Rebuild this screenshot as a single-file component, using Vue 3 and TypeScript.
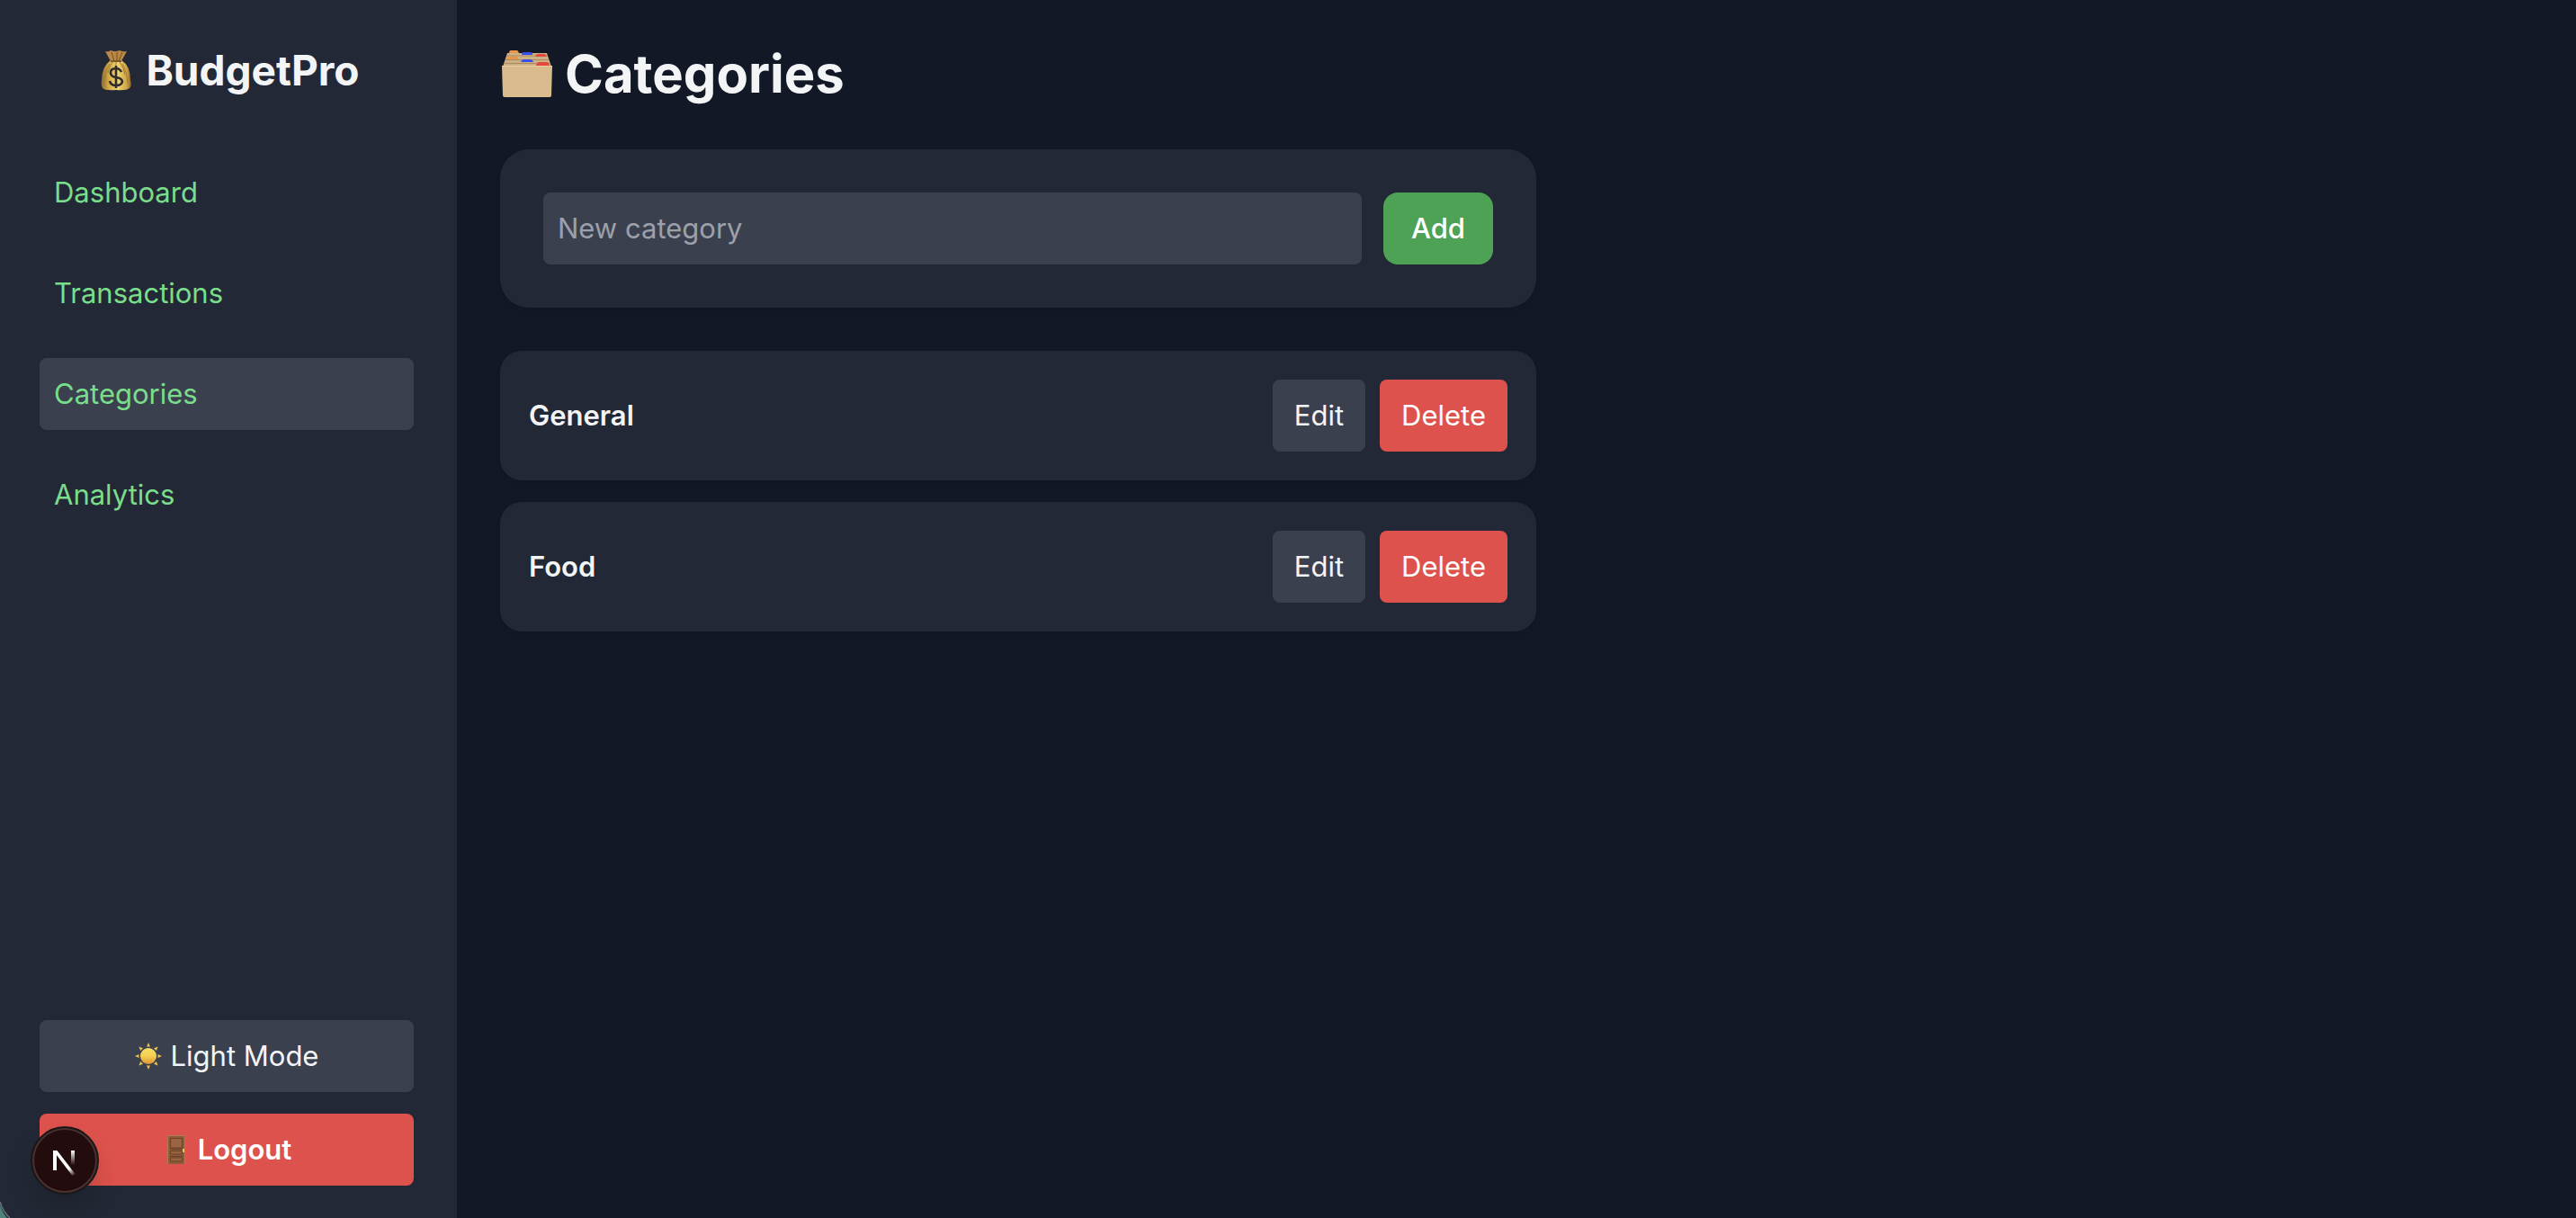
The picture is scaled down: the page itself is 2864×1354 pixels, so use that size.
<script setup lang="ts">
import { ref } from 'vue'

interface NavItem { label: string; active: boolean }

const navItems: NavItem[] = [
  { label: 'Dashboard', active: false },
  { label: 'Transactions', active: false },
  { label: 'Categories', active: true },
  { label: 'Analytics', active: false },
]
const categories = ref<string[]>(['General', 'Food'])
const newCategory = ref('')

function addCategory() {
  const name = newCategory.value.trim()
  if (name) categories.value.push(name)
  newCategory.value = ''
}
function removeCategory(index: number) {
  categories.value.splice(index, 1)
}
</script>

<template>
  <div class="app">
    <aside class="sidebar">
      <div>
        <div class="brand">
          <svg class="bag" viewBox="0 0 34 46" aria-hidden="true">
            <defs>
              <linearGradient id="bagGold" x1="0" x2="1" y1="0" y2="0">
                <stop offset="0" stop-color="#8f6a2b" />
                <stop offset=".25" stop-color="#d2ac4a" />
                <stop offset=".55" stop-color="#efd672" />
                <stop offset=".85" stop-color="#cda548" />
                <stop offset="1" stop-color="#8a642a" />
              </linearGradient>
            </defs>
            <path d="M5 2 Q9 3 11 1 Q16 3 21 1 Q25 3 29 2 L23 13 H11Z" fill="#b98847" />
            <path d="M12 3 15 13M18 3V13M24 3 20 13" stroke="#76501f" stroke-width="1" fill="none" />
            <path d="M11 12 H23 Q33 18 33 34 Q35 41 32 43 Q28 46 17 45 Q5 46 2 43 Q0 40 1 34 Q1 19 11 12Z" fill="url(#bagGold)" />
            <path d="M10 16Q5 24 4 38M24 16Q29 24 30 38M17 14V18M13 14Q9 20 8 26M21 14Q26 20 27 28" stroke="#a67d31" stroke-width="1" fill="none" />
            <path d="M11 13H23" stroke="#80592a" stroke-width="2" />
            <path d="M23 25Q21 21 17 21Q11 21 11 26Q11 30 17 31Q24 32 24 36Q23 40 17 40Q11 40 10 35M17 18V43" stroke="#302c2c" stroke-width="2.6" fill="none" />
          </svg>
          <span>BudgetPro</span>
        </div>
        <nav class="nav">
          <a v-for="item in navItems" :key="item.label" href="#" class="nav-link" :class="{ active: item.active }">{{ item.label }}</a>
        </nav>
      </div>
      <div class="side-actions">
        <button type="button" class="side-btn mode">
          <svg class="sun" viewBox="0 0 30 30" aria-hidden="true">
            <defs>
              <linearGradient id="sunDisc" x1="0" x2="0" y1="0" y2="1">
                <stop offset="0" stop-color="#f6df66" />
                <stop offset=".5" stop-color="#f5cf50" />
                <stop offset="1" stop-color="#dc9531" />
              </linearGradient>
            </defs>
            <circle cx="15" cy="15" r="9" fill="url(#sunDisc)" />
            <path v-for="n in 8" :key="n" d="M13 4.500 15 0 17 4.500Z" fill="#ecc04e" :transform="`rotate(${n * 45} 15 15)`" />
          </svg>
          <span>Light Mode</span>
        </button>
        <button type="button" class="side-btn logout">
          <svg class="door" viewBox="0 0 20 32" aria-hidden="true">
            <rect width="20" height="32" fill="#b07a55" />
            <rect x="1" y="1" width="18" height="31" fill="#8f5c3b" />
            <path d="M3.500 3.500H16.500V14H3.500ZM3.500 17.500H16.500V21H3.500ZM3.500 25H16.500V29H3.500Z" fill="#9a6442" stroke="#6b4128" stroke-width="1" />
            <path d="M3 15.500H17M3 23.500H17" stroke="#6b4128" stroke-width="1" />
            <path d="M17 15H19V19H17Z" fill="#e6c34c" />
          </svg>
          <span>Logout</span>
        </button>
      </div>
    </aside>

    <main class="main">
      <h1 class="title">
        <svg class="box" viewBox="0 0 56 54" aria-hidden="true">
          <path d="M6 4H50L55 19H1Z" fill="#cdb083" />
          <path d="M5 7H51M4 11.500H52M2 15.500H54" stroke="#a98b60" stroke-width="1" />
          <path d="M8 4Q8 1 10 1H17Q18 1 19 4Z" fill="#e8964a" />
          <path d="M22 6Q22 3 24 3H32Q34 3 34 6Z" fill="#3c4df0" />
          <path d="M37 8Q38 5 40 5H47Q49 5 50 8Z" fill="#e2483d" />
          <path d="M5 11Q6 8 8 8H16Q18 8 18 11Z" fill="#e8964a" />
          <path d="M21 14Q22 11 24 11H32Q34 11 35 14Z" fill="#3c4df0" />
          <path d="M38 18Q39 14 41 14H50Q52 14 53 18Z" fill="#e2483d" />
          <path d="M0 18H56L55 51Q55 53 53 53H3Q1 53 1 51Z" fill="#dabb8d" />
          <path d="M0 18.500H56" stroke="#ebcf9f" stroke-width="1" />
        </svg>
        <span>Categories</span>
      </h1>

      <form class="add-card" @submit.prevent="addCategory">
        <input v-model="newCategory" class="field" type="text" placeholder="New category" aria-label="New category" />
        <button type="submit" class="add">Add</button>
      </form>

      <ul class="list">
        <li v-for="(name, i) in categories" :key="name" class="item">
          <span class="name">{{ name }}</span>
          <div class="actions">
            <button type="button" class="edit">Edit</button>
            <button type="button" class="delete" @click="removeCategory(i)">Delete</button>
          </div>
        </li>
      </ul>
    </main>

    <button type="button" class="dev-badge" aria-label="Open dev tools">
      <svg viewBox="0 0 76 76" aria-hidden="true">
        <defs>
          <linearGradient id="nDiag" gradientUnits="userSpaceOnUse" x1="39" y1="42" x2="49" y2="55">
            <stop offset="0" stop-color="#fff" />
            <stop offset=".4" stop-color="#fff" />
            <stop offset="1" stop-color="#fff" stop-opacity="0" />
          </linearGradient>
          <linearGradient id="nStem" gradientUnits="userSpaceOnUse" x1="47" y1="27" x2="47" y2="43">
            <stop offset="0" stop-color="#fff" />
            <stop offset="1" stop-color="#fff" stop-opacity="0" />
          </linearGradient>
        </defs>
        <circle cx="38" cy="38" r="37" fill="#230c0d" stroke="#171717" stroke-width="2" />
        <circle cx="38" cy="38" r="35" fill="none" stroke="#493131" stroke-width="2" />
        <path d="M25 27H29V49H25Z" fill="#fff" />
        <path d="M25 27H29.500L49.500 53 46.500 55Z" fill="url(#nDiag)" />
        <path d="M45 27H49V43H45Z" fill="url(#nStem)" />
      </svg>
    </button>
    <svg class="corner" viewBox="0 0 12 24" aria-hidden="true">
      <path d="M0 6Q3 17 11 24H0Z" fill="#1b2430" />
      <path d="M0 9Q2 17 8 24H0Z" fill="#4c8078" />
      <path d="M0 6Q3 17 11 24" fill="none" stroke="#6b727c" stroke-width="1.500" />
    </svg>
  </div>
</template>

<style>
body {
  background: #121826;
}
</style>

<style scoped>
.app {
  display: flex;
  min-height: 100vh;
  background: #121826;
  color: #f3f4f6;
  font-family: Inter, "Liberation Sans", sans-serif;
  font-size: 31px;
  line-height: 48px;
}
.app *,
.app {
  box-sizing: border-box;
}
button,
input {
  margin: 0;
  border: 0;
  font: inherit;
  color: inherit;
}
button {
  cursor: pointer;
}
svg {
  display: block;
  flex: none;
}
.sidebar {
  display: flex;
  flex: none;
  flex-direction: column;
  justify-content: space-between;
  width: 508px;
  padding: 46px 48px 36px 44px;
  background: #222835;
}
.brand {
  display: flex;
  align-items: center;
  justify-content: center;
  gap: 16px;
  margin-bottom: 64px;
  padding-left: 8px;
  font-size: 46px;
  font-weight: 700;
  line-height: 64px;
}
.bag {
  width: 34px;
  height: 46px;
}
.nav {
  display: flex;
  flex-direction: column;
  gap: 32px;
}
.nav-link {
  padding: 16px;
  border-radius: 8px;
  color: #7add8b;
  text-decoration: none;
}
.nav-link.active {
  background: #3b404f;
}
.side-actions {
  display: flex;
  flex-direction: column;
  gap: 24px;
}
.side-btn {
  display: flex;
  align-items: center;
  justify-content: center;
  gap: 10px;
  padding: 16px;
  border-radius: 8px;
}
.mode {
  background: #3b404f;
}
.logout {
  gap: 14px;
  padding-left: 22px;
  background: #dd524c;
  color: #fff;
  font-weight: 600;
}
.sun {
  width: 30px;
  height: 30px;
}
.door {
  width: 20px;
  height: 32px;
}
.main {
  flex: 1;
  min-width: 0;
  padding: 46px 48px;
}
.title {
  display: flex;
  align-items: center;
  gap: 14px;
  margin: 0 0 48px;
  padding-left: 2px;
  font-size: 58px;
  font-weight: 700;
  line-height: 72px;
}
.box {
  width: 56px;
  height: 54px;
}
.add-card {
  display: flex;
  gap: 24px;
  max-width: 1152px;
  margin-bottom: 48px;
  padding: 48px;
  border-radius: 32px;
  background: #222835;
  box-shadow: 0 2px 4px rgba(0, 0, 0, 0.1);
}
.field {
  flex: 1;
  min-width: 0;
  padding: 16px;
  border-radius: 8px;
  outline: none;
  background: #3b404f;
}
.field::placeholder {
  color: #9ca0aa;
  opacity: 1;
}
.add {
  padding: 16px 31px;
  border-radius: 16px;
  background: #4ea255;
  color: #fff;
  font-weight: 500;
}
.list {
  display: flex;
  flex-direction: column;
  gap: 24px;
  max-width: 1152px;
  margin: 0;
  padding: 0;
  list-style: none;
}
.item {
  display: flex;
  align-items: center;
  justify-content: space-between;
  padding: 32px;
  border-radius: 24px;
  background: #222835;
  box-shadow: 0 2px 4px rgba(0, 0, 0, 0.1);
}
.name {
  font-weight: 600;
}
.actions {
  display: flex;
  gap: 16px;
}
.edit,
.delete {
  padding: 16px 24px;
  border-radius: 8px;
  background: #3b404f;
}
.delete {
  background: #dd524c;
  color: #fff;
}
.dev-badge {
  position: fixed;
  bottom: 26px;
  left: 34px;
  width: 76px;
  height: 76px;
  padding: 0;
  border-radius: 50%;
  background: none;
  box-shadow: 0 16px 32px -8px rgba(0, 0, 0, 0.24);
}
.corner {
  position: fixed;
  bottom: 0;
  left: 0;
  width: 12px;
  height: 24px;
}
</style>
